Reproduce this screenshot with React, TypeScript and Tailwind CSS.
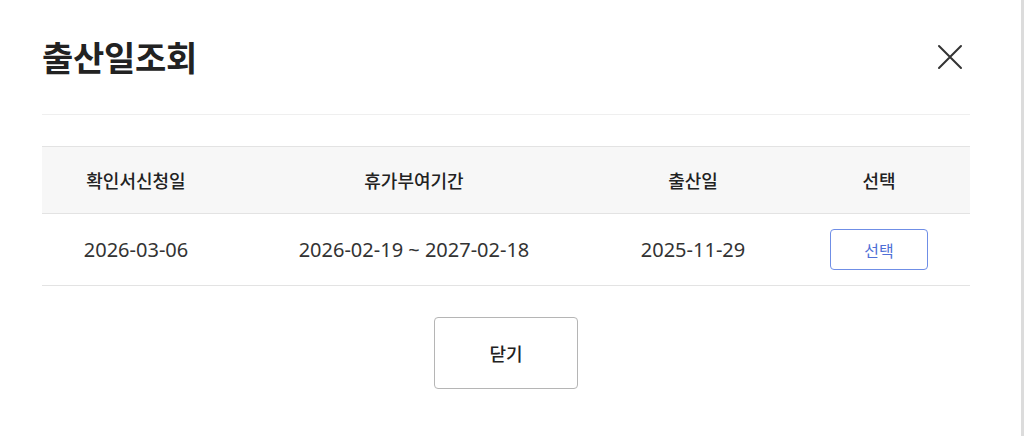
import React from 'react'

interface BirthRow {
  requestDate: string;
  leavePeriod: string;
  birthDate: string;
}

const rows: BirthRow[] = [
  { requestDate: "2026-03-06", leavePeriod: "2026-02-19 ~ 2027-02-18", birthDate: "2025-11-29" },
]

function App() {
  return (
    <div className="flex h-[436px] w-[1024px] bg-white text-[#222]" style={{ fontFamily: '"Noto Sans CJK KR", "Noto Sans", sans-serif' }}>
      <div className="flex-1 pl-[42px] pt-[31px]">
        <div className="flex w-[928px] items-center justify-between">
          <h1 className="text-[34px] font-bold leading-[52px] tracking-[-0.3px]">출산일조회</h1>
          <button className="flex h-[40px] w-[40px] items-center justify-center text-[#333]">
            <svg width="26" height="26" viewBox="0 0 26 26" fill="none" stroke="currentColor" strokeWidth="2" strokeLinecap="round">
              <path d="M2 2 L24 24 M24 2 L2 24" />
            </svg>
          </button>
        </div>

        <div className="mt-[31px] h-px w-[928px] bg-[#efefef]" />

        <table className="mt-[31px] w-[928px] table-fixed border-collapse text-[18px] text-[#333]">
          <colgroup>
            <col className="w-[188px]" />
            <col className="w-[368px]" />
            <col className="w-[190px]" />
            <col />
          </colgroup>
          <thead>
            <tr className="h-[67px] border-y border-[#e3e3e3] bg-[#f7f7f7] text-[#222]">
              <th className="font-medium">확인서신청일</th>
              <th className="font-medium">휴가부여기간</th>
              <th className="font-medium">출산일</th>
              <th className="font-medium">선택</th>
            </tr>
          </thead>
          <tbody>
            {rows.map((r) => (
              <tr key={r.requestDate} className="h-[72px] border-b border-[#e3e3e3] text-center">
                <td className="text-[20px] font-['Noto_Sans'] text-[#333]">{r.requestDate}</td>
                <td className="text-[20px] font-['Noto_Sans'] text-[#333]">{r.leavePeriod}</td>
                <td className="text-[20px] font-['Noto_Sans'] text-[#333]">{r.birthDate}</td>
                <td>
                  <button className="h-[41px] w-[98px] rounded-[4px] border border-[#6f8ee6] text-[16px] text-[#4f6fd6]">선택</button>
                </td>
              </tr>
            ))}
          </tbody>
        </table>

        <div className="mt-[31px] flex w-[928px] justify-center">
          <button className="h-[72px] w-[144px] rounded-[4px] border border-[#b5b5b5] text-[18px] font-medium text-[#222]">닫기</button>
        </div>
      </div>
      <div className="w-[3px] bg-[#dcdcdc]" />
    </div>
  )
}

export default App
